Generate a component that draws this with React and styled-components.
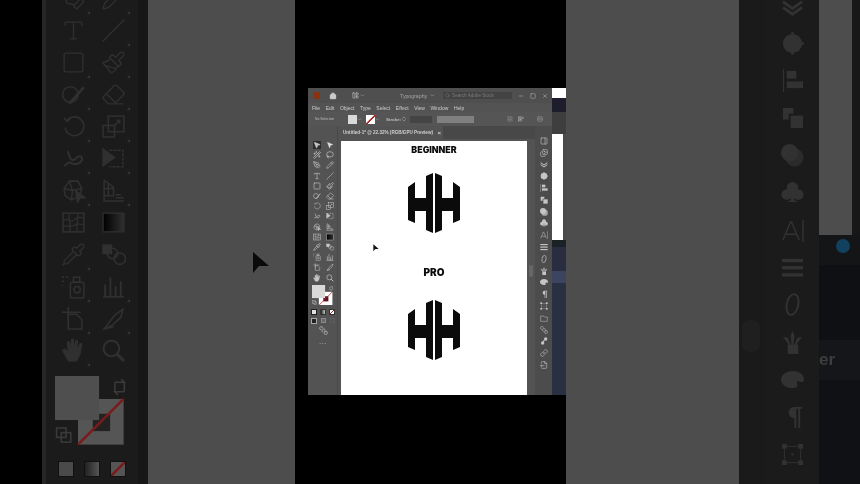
import styled, { createGlobalStyle } from "styled-components"
import {
  ChevronDown, ChevronsUpDown, Eraser, FileOutput, Hand, House, Lasso, LayoutGrid, LayoutPanelLeft, Link,
  MousePointer2, Paintbrush, PenTool, Pencil, Pipette, Search, Slash, Square, Type, WandSparkles, X, Minus,
  AlignStartVertical, Rows3, SquareStack, Images, PanelRight,
} from "lucide-react"

const GlobalStyle = createGlobalStyle`
  html, body { margin: 0; padding: 0; background: #000; }
  body { width: 860px; height: 484px; overflow: hidden; font-family: "Liberation Sans", Arial, sans-serif; }
`

const Stage = styled.div`
  display: flex;
  width: 860px;
  height: 484px;
  overflow: hidden;
  background: #000;
`

/* blurred backdrop, left */
const SideLeft = styled.div`
  position: relative;
  display: flex;
  width: 295px;
  flex: none;
  filter: blur(0.7px);
`

const BlackStrip = styled.div`
  width: 42px;
  background: #000;
`

const BigToolbar = styled.div`
  width: 106px;
  padding: 0 0 0 7px;
  box-sizing: border-box;
  background: #1b1b1b;
  border-left: 4px solid #262626;
  border-right: 10px solid #171717;
  overflow: hidden;
`

const GreyField = styled.div`
  flex: 1;
  background: #4d4d4d;
`

const BigPointer = styled.svg`
  position: absolute;
  left: 252px;
  top: 252px;
`

/* blurred backdrop, right */
const SideRight = styled.div`
  display: flex;
  flex: 1;
  filter: blur(0.7px);
`

const GreyFieldRight = styled.div`
  width: 173px;
  background: #4d4d4d;
`

const ScrollGutter = styled.div`
  width: 26px;
  background: #1a1a1a;
  padding-top: 320px;
  box-sizing: border-box;
`

const ScrollThumb = styled.div`
  width: 18px;
  height: 32px;
  margin-left: 3px;
  border-radius: 7px;
  background: #1f1f1f;
`

const BigPanel = styled.div`
  width: 54px;
  background: #1b1b1b;
  overflow: hidden;
`

const OtherApp = styled.div`
  flex: 1;
  display: flex;
  flex-direction: column;
  background: #101114;
`

const OtherTop = styled.div`
  height: 235px;
  display: flex;
  background: #171717;
`

const OtherPane = styled.div`
  width: 33px;
  background: #4d4d4d;
`

const OtherTaskbar = styled.div`
  height: 30px;
  padding: 4px 0 0 17px;
  box-sizing: border-box;
  background: #141517;
  display: flex;
  gap: 13px;
`

const OtherBall = styled.div`
  width: 14px;
  height: 14px;
  border-radius: 50%;
  background: #12405f;
  flex: none;
`

const OtherChip = styled.div`
  width: 6px;
  height: 10px;
  margin-top: 2px;
  background: #3a3428;
  flex: none;
`

const OtherBody = styled.div`
  height: 75px;
  background: #0f1013;
`

const OtherTitle = styled.div`
  height: 40px;
  background: #15161a;
  color: #3e3e3e;
  font-size: 17px;
  font-weight: 700;
  line-height: 40px;
`

/* middle column with the real capture */
const Center = styled.div`
  width: 271px;
  flex: none;
  height: 307px;
  margin-top: 88px;
  padding-left: 13px;
  box-sizing: border-box;
  display: flex;
  filter: blur(0.5px);
`

const Window = styled.div`
  width: 244px;
  display: flex;
  flex-direction: column;
  background: #535353;
  color: #c9c9c9;
  overflow: hidden;
`

const TitleBar = styled.div`
  height: 15px;
  flex: none;
  display: flex;
  align-items: center;
  padding: 0 4px 0 5px;
  background: #4f4f4f;
`

const AppMark = styled.div`
  width: 7px;
  height: 7px;
  background: #8a3212;
  margin-right: 9px;
`

const WorkspaceLabel = styled.span`
  font-size: 5.2px;
  color: #a4a4a4;
  margin: 0 3px 0 35px;
`

const SearchField = styled.div`
  width: 69px;
  height: 7px;
  margin-left: 8px;
  display: flex;
  align-items: center;
  gap: 2px;
  padding-left: 2px;
  box-sizing: border-box;
  background: #434343;
  color: #7b7b7b;
  font-size: 4.6px;
  white-space: nowrap;
`

const WindowButtons = styled.div`
  margin-left: auto;
  display: flex;
  gap: 6px;
  color: #b8b8b8;
`

const MenuBar = styled.div`
  height: 9px;
  flex: none;
  display: flex;
  align-items: center;
  gap: 5.6px;
  padding-left: 4px;
  font-size: 5px;
  color: #cdcdcd;
`

const ControlBar = styled.div`
  height: 14px;
  flex: none;
  display: flex;
  align-items: center;
  padding-left: 7px;
  background: #555;
  font-size: 4.4px;
  color: #bdbdbd;
`

const NoSelection = styled.span`
  width: 11px;
  font-size: 3.4px;
  white-space: nowrap;
`

const Swatch = styled.div`
  width: 9px;
  height: 9px;
  margin-left: ${(p) => p.$gap}px;
  background: ${(p) => (p.$none ? "linear-gradient(135deg, #fff 44%, #b12a2a 46%, #b12a2a 56%, #fff 58%)" : "#d9d9d9")};
`

const StrokeLabel = styled.span`
  margin: 0 0 0 6px;
  width: 15px;
  font-weight: 700;
`

const Field = styled.div`
  height: 7px;
  width: ${(p) => p.$w}px;
  margin-left: ${(p) => p.$gap}px;
  background: ${(p) => p.$bg};
`

const Body = styled.div`
  flex: 1;
  min-height: 0;
  display: flex;
`

const ToolColumn = styled.div`
  width: 30px;
  flex: none;
  display: flex;
  flex-direction: column;
  align-items: center;
  padding: 14px 0 0 1px;
  box-sizing: border-box;
  background: #535353;
  border-right: 1px solid #484848;
`

const ToolGrid = styled.div`
  display: grid;
  grid-template-columns: repeat(2, ${(p) => p.$col}px);
  grid-auto-rows: ${(p) => p.$row}px;
  margin-top: ${(p) => p.$top || 0}px;
  place-items: center;
  color: ${(p) => p.$color};
`

const ToolCell = styled.div`
  position: relative;
  display: flex;
  align-items: center;
  justify-content: center;
  background: ${(p) => (p.$active ? "#2c2c2c" : "transparent")};

  ${(p) =>
    p.$tick &&
    `&::after {
      content: "";
      position: absolute;
      right: -4px;
      bottom: -3px;
      border-style: solid;
      border-width: 0 0 3px 3px;
      border-color: transparent transparent #383838 transparent;
    }`}
`

const SwatchWrap = styled.div`
  margin: ${(p) => p.$margin};
  line-height: 0;
`

const MiniRow = styled.div`
  display: flex;
  gap: ${(p) => p.$gap}px;
  margin-top: ${(p) => p.$top}px;
  margin-left: ${(p) => p.$left || 0}px;
`

const ModeBox = styled.div`
  width: ${(p) => p.$size}px;
  height: ${(p) => p.$size}px;
  box-sizing: border-box;
  border: ${(p) => p.$border};
  background: ${(p) => p.$bg};
`

const Dots = styled.div`
  margin-top: 4px;
  font-size: 8px;
  line-height: 6px;
  letter-spacing: 0.5px;
  color: #bbb;
`

const DocColumn = styled.div`
  flex: 1;
  min-width: 0;
  display: flex;
  flex-direction: column;
`

const TabRow = styled.div`
  height: 13px;
  flex: none;
  display: flex;
  background: #484848;
`

const Tab = styled.div`
  width: 105px;
  display: flex;
  align-items: center;
  padding-left: 5px;
  box-sizing: border-box;
  background: #535353;
  font-size: 4.6px;
  font-weight: 700;
  color: #cfcfcf;
  white-space: nowrap;
`

const TabClose = styled.span`
  margin-left: auto;
  margin-right: 2px;
  font-size: 6px;
`

const CanvasArea = styled.div`
  position: relative;
  flex: 1;
  min-height: 0;
  display: flex;
  padding: 2px 0 0 3px;
  background: #535353;
`

const Page = styled.div`
  width: 186px;
  display: flex;
  flex-direction: column;
  align-items: center;
  background: #fff;
  color: #0c0c0c;
`

const Heading = styled.div`
  font-family: Inter, "Liberation Sans", sans-serif;
  font-size: ${(p) => p.$size}px;
  font-weight: 900;
  line-height: 10px;
  margin-top: ${(p) => p.$top}px;
`

const LogoBox = styled.div`
  margin-top: ${(p) => p.$top}px;
  line-height: 0;
`

const SmallPointer = styled.svg`
  position: absolute;
  left: 35px;
  top: 105px;
`

const VScroll = styled.div`
  width: 8px;
  flex: none;
  padding-top: 124px;
  box-sizing: border-box;
`

const VThumb = styled.div`
  width: 4px;
  height: 12px;
  margin-left: 2px;
  border-radius: 2px;
  background: #676767;
`

const RightDock = styled.div`
  width: 17px;
  flex: none;
  display: flex;
  flex-direction: column;
  background: #4c4c4c;
  color: #c5c5c5;
`

const PanelStack = styled.div`
  display: flex;
  flex-direction: column;
  align-items: center;
  margin-top: ${(p) => p.$top}px;
  color: ${(p) => p.$color};
`

const PanelSlot = styled.div`
  height: ${(p) => p.$h}px;
  display: flex;
  align-items: center;
  justify-content: center;
`

/* other app peeking out behind the window */
const Behind = styled.div`
  width: 14px;
  display: flex;
  flex-direction: column;
`

const BehindBand = styled.div`
  height: ${(p) => p.$h}px;
  flex: ${(p) => (p.$h ? "none" : 1)};
  background: ${(p) => p.$bg};
  border-right: ${(p) => (p.$edge ? "3px solid #4a4a4a" : "none")};
`

/* hand drawn Illustrator glyphs, the packages have no match for these */
const Glyph = ({ size, fill = "none", sw = 1.5, children }) => (
  <svg width={size} height={size} viewBox="0 0 24 24" fill={fill} stroke={fill === "none" ? "currentColor" : "none"} strokeWidth={sw}>
    {children}
  </svg>
)

const Shaper = ({ size }) => <Glyph size={size}><circle cx="9" cy="12" r="7.5" /><path d="M8 21 22 5" strokeWidth="2.6" /></Glyph>
const RotateTool = ({ size }) => <Glyph size={size}><path d="M6 6A9 9 0 1 1 4 13" /><path d="M3 4l3 3 3-3" /></Glyph>
const ScaleTool = ({ size }) => <Glyph size={size}><rect x="2" y="11" width="11" height="11" /><rect x="7" y="2" width="15" height="15" /><path d="M13 11l5-5M15 6h3v3" /></Glyph>
const WarpTool = ({ size }) => <Glyph size={size} sw={2}><path d="M3 19c3-1 3-4 6-3s5 3 9 0 2-7-1-6-4 5-7 3-2-7-4-8" /></Glyph>
const FreeTransform = ({ size }) => <Glyph size={size}><path d="M2 3l11 8-11 8Z" fill="currentColor" /><path d="M8 4h13v16H8" strokeDasharray="3 1" /></Glyph>
const ShapeBuilder = ({ size }) => <Glyph size={size}><path d="M3 10 8 3h8l4 7-2 7-8 4-6-4ZM3 10l8 2 9-2M11 12l-1 9M8 3l3 9" /><path d="M14 12l9 7-5 0-2 4Z" fill="currentColor" /></Glyph>
const Perspective = ({ size }) => <Glyph size={size}><path d="M3 2v20h19M3 2l9 7v8H3M3 10h9M7 5v12" /><path d="M14 19h8M14 16h5" /></Glyph>
const Mesh = ({ size }) => <Glyph size={size}><rect x="2" y="3" width="20" height="18" /><path d="M2 10c5-3 7 3 10 0s6-4 10-2M2 16c5-2 6 1 10-1s7-2 10 0M8 3c-2 6 3 10 0 18M16 3c2 6-3 10 0 18" strokeWidth="1.2" /></Glyph>
const Gradient = ({ size }) => (
  <svg width={size} height={size} viewBox="0 0 24 24">
    <defs>
      <linearGradient id="tool-grad">
        <stop offset="0" stopColor="#000" />
        <stop offset="1" stopColor="currentColor" />
      </linearGradient>
    </defs>
    <rect x="2" y="3" width="20" height="18" fill="url(#tool-grad)" stroke="currentColor" strokeWidth="1.2" />
  </svg>
)
const BlendTool = ({ size }) => <Glyph size={size}><rect x="2" y="3" width="8" height="8" fill="currentColor" /><circle cx="11" cy="11" r="5" /><circle cx="18" cy="16" r="5.5" /></Glyph>
const Sprayer = ({ size }) => <Glyph size={size}><rect x="9" y="8" width="13" height="15" rx="2" /><rect x="12" y="3" width="6" height="5" /><circle cx="15.5" cy="15" r="3" /><path d="M1 3h2M5 3h2M1 7h2M1 11h1" /></Glyph>
const Graph = ({ size }) => <Glyph size={size} sw={1.8}><path d="M2 22h20M4 22V10M9 22V3M14 22V12M19 22V7" /></Glyph>
const Artboard = ({ size }) => <Glyph size={size}><path d="M1 6h18M7 1v15" /><path d="M7 8h8l5 5v9H7Z" /></Glyph>
const Slicer = ({ size }) => <Glyph size={size}><path d="M3 22 13 9l8-6-2 8-9 8Z" /><path d="M3 22l9-2" /></Glyph>
const Zoom = ({ size }) => <Glyph size={size} sw={2}><circle cx="10" cy="10" r="7.5" /><path d="M15.5 15.5 22 22" strokeWidth="2.8" /></Glyph>
const FilledHand = ({ size }) => (
  <svg width={size} height={size} viewBox="0 0 24 24" fill="currentColor" stroke="currentColor" strokeWidth="1">
    <path d="M7 22 2 13c-1-2 1-3 2-2l3 3-1-9c0-2 2-2 2-1l2 6V2c0-1.500 2-1.500 2 0v9l2-8c.5-1.500 2-1 2 .5L15 12l3-6c.7-1.200 2-.7 2 .5l-2 10-3 5.500Z" />
  </svg>
)

const LayersBig = ({ size }) => <Glyph size={size} sw={3}><path d="M2 8l10 7 10-7M2 14l10 7 10-7" /></Glyph>
const Appearance = ({ size }) => <Glyph size={size} fill="currentColor"><circle cx="12" cy="12" r="10" /><circle cx="12" cy="1.500" r="1.500" /><circle cx="12" cy="22.500" r="1.500" /><circle cx="22.500" cy="12" r="1.500" /></Glyph>
const AlignGlyph = ({ size }) => <Glyph size={size} fill="currentColor"><rect x="2" y="0" width="1.200" height="24" /><rect x="6" y="2" width="10" height="8" /><rect x="6" y="13" width="17" height="7" /></Glyph>
const Pathfinder = ({ size }) => <Glyph size={size} fill="currentColor"><path d="M2 2h11v6H8v6H2Z" /><path d="M10 10h13v13H10Z" /></Glyph>
const Transparency = ({ size }) => <Glyph size={size} fill="currentColor"><circle cx="9" cy="9" r="9" /><circle cx="14" cy="14" r="9.500" opacity="0.75" /></Glyph>
const ClubGlyph = ({ size }) => <Glyph size={size} fill="currentColor"><circle cx="12" cy="7" r="6" /><circle cx="6" cy="14" r="5.500" /><circle cx="18" cy="14" r="5.500" /><path d="M11 12h2l1 8 4 2H6l4-2Z" /></Glyph>
const LetterA = ({ size }) => <Glyph size={size} sw={1.800}><path d="M2 22 10 3h1l8 19M5 16h12M23 1v23" strokeWidth="1.500" /></Glyph>
const Lines = ({ size }) => <Glyph size={size} fill="currentColor"><rect x="1" y="3" width="22" height="3.500" /><rect x="1" y="10.500" width="22" height="3.500" /><rect x="1" y="18" width="22" height="3.500" /></Glyph>
const OpenType = ({ size }) => <Glyph size={size} sw={2}><ellipse cx="12" cy="12" rx="6" ry="11" transform="rotate(12 12 12)" /></Glyph>
const Plume = ({ size }) => <Glyph size={size} fill="currentColor"><rect x="7" y="14" width="11" height="10" /><path d="M12 0l2 5-1 9h-2l-1-9ZM2 6l5 1 3 7H8ZM22 6l-5 1-3 7h2Z" /></Glyph>
const PaletteGlyph = ({ size }) => <Glyph size={size} fill="currentColor"><path d="M12 3c6 0 12 3 12 9 0 3-3 3-5 2-2-.7-3 1-2 3s-1 4-5 4C5 21 0 17 0 12S6 3 12 3Z" /></Glyph>
const PilcrowGlyph = ({ size }) => <Glyph size={size} fill="currentColor"><path d="M10 2h12v2h-2v20h-2V4h-2v20h-2V14a6 6 0 0 1 0-12Z" /></Glyph>
const TransformGlyph = ({ size }) => <Glyph size={size} fill="currentColor"><rect x="1" y="1" width="5" height="5" /><rect x="18" y="1" width="5" height="5" /><rect x="1" y="18" width="5" height="5" /><rect x="18" y="18" width="5" height="5" /><rect x="6" y="3" width="12" height="1" /><rect x="6" y="20" width="12" height="1" /><rect x="3" y="6" width="1" height="12" /><rect x="20" y="6" width="1" height="12" /><rect x="11" y="11" width="2" height="2" /></Glyph>
const BrushesGlyph = ({ size }) => <Glyph size={size}><path d="M2 6h9l2 3h9v13H2Z" /></Glyph>
const SymbolsGlyph = ({ size }) => <Glyph size={size} fill="currentColor"><circle cx="17" cy="6" r="5" /><circle cx="8" cy="18" r="5" /><path d="M12 8l3 2-6 6-2-2Z" /></Glyph>

const bigTools = [
  [PenTool, Pencil], [Type, Slash], [Square, Paintbrush], [Shaper, Eraser], [RotateTool, ScaleTool],
  [WarpTool, FreeTransform], [ShapeBuilder, Perspective], [Mesh, Gradient], [Pipette, BlendTool],
  [Sprayer, Graph], [Artboard, Slicer], [FilledHand, Zoom],
]

const noTick = new Set([Mesh, Gradient, Type, Zoom, BlendTool])

const panelIcons = [
  PanelRight, Images, LayersBig, Appearance, AlignGlyph, Pathfinder, Transparency, ClubGlyph, LetterA, Lines,
  OpenType, Plume, PaletteGlyph, PilcrowGlyph, TransformGlyph, BrushesGlyph, SquareStack, SymbolsGlyph, Link, FileOutput,
]

function ToolIcons({ size, stroke, ticks }) {
  return bigTools.flat().map((Icon, i) => (
    <ToolCell key={i} $tick={ticks && !noTick.has(Icon)}>
      <Icon size={size} strokeWidth={stroke} />
    </ToolCell>
  ))
}

function FillStroke({ width, fill, stroke, inner, line, glyph }) {
  return (
    <svg width={width} height={(width * 22) / 23.5} viewBox="0 0 23.500 22">
      <rect x="7.300" y="7.300" width="14.500" height="14.500" fill={stroke} />
      <rect x="12" y="12" width="5.500" height="5.500" fill={inner} />
      <path d="M7.300 21.800 21.800 7.300" stroke={line} strokeWidth="0.800" />
      <rect x="0" y="0" width="14" height="14" fill={fill} />
      <path d="M19 2h3l-1 -1M22 2v3M22 5h-3l1 1M19 5V2" stroke={glyph} strokeWidth="0.500" fill="none" />
      <rect x="0.500" y="16.500" width="3" height="3" fill="none" stroke={glyph} strokeWidth="0.500" />
      <rect x="2" y="18" width="3" height="3" fill="none" stroke={glyph} strokeWidth="0.500" />
    </svg>
  )
}

function HexLogo() {
  return (
    <svg width="52" height="60" viewBox="0 0 52 60" fill="#0b0b0b">
      <path d="M0 14 7 9V25H18V3L25 0V60L18 57V38H7V50L0 47Z" />
      <path d="M52 14 45 9V25H34V3L27 0V60L34 57V38H45V50L52 47Z" />
    </svg>
  )
}

function App() {
  return (
    <>
      <GlobalStyle />
      <Stage>
        <SideLeft>
          <BlackStrip />
          <BigToolbar>
            <ToolGrid $col={40} $row={32} $top={-18} $color="#303030">
              <ToolIcons size={25} stroke={1.3} ticks />
            </ToolGrid>
            <SwatchWrap $margin="10px 0 0 2px">
              <FillStroke width={74} fill="#4f4f4f" stroke="#555" inner="#222" line="#7a1b1b" glyph="#3a3a3a" />
            </SwatchWrap>
            <MiniRow $gap={10} $top={16} $left={5}>
              <ModeBox $size={16} $bg="#4a4a4a" $border="1px solid #111" />
              <ModeBox $size={16} $bg="linear-gradient(90deg, #222, #555)" $border="1px solid #111" />
              <ModeBox $size={16} $bg="linear-gradient(135deg, #555 42%, #7a1b1b 45%, #7a1b1b 55%, #555 58%)" $border="1px solid #111" />
            </MiniRow>
          </BigToolbar>
          <GreyField />
          <BigPointer width="18" height="22" viewBox="0 0 18 22">
            <path d="M1 0 17 14 7 14 1 21Z" fill="#0a0a0a" />
          </BigPointer>
        </SideLeft>

        <Center>
          <Window>
            <TitleBar>
              <AppMark />
              <House size={8} fill="#c9c9c9" strokeWidth={1} />
              <LayoutPanelLeft size={7} style={{ marginLeft: 15 }} />
              <ChevronDown size={5} style={{ marginLeft: 1 }} />
              <WorkspaceLabel>Typography</WorkspaceLabel>
              <ChevronDown size={5} />
              <SearchField>
                <Search size={5} />
                Search Adobe Stock
              </SearchField>
              <WindowButtons>
                <Minus size={6} />
                <Square size={6} />
                <X size={6} />
              </WindowButtons>
            </TitleBar>
            <MenuBar>
              {["File", "Edit", "Object", "Type", "Select", "Effect", "View", "Window", "Help"].map((m) => (
                <span key={m}>{m}</span>
              ))}
            </MenuBar>
            <ControlBar>
              <NoSelection>No Selection</NoSelection>
              <Swatch $gap={22} />
              <ChevronDown size={5} />
              <Swatch $gap={4} $none />
              <ChevronDown size={5} />
              <StrokeLabel>Stroke:</StrokeLabel>
              <ChevronsUpDown size={6} />
              <Field $w={22} $gap={3} $bg="#444" />
              <Field $w={37} $gap={5} $bg="#808080" />
              <LayoutGrid size={6} style={{ marginLeft: 33, color: "#8a8a8a" }} />
              <AlignStartVertical size={6} style={{ marginLeft: 5 }} />
              <Rows3 size={6} style={{ marginLeft: 13, color: "#9a9a9a" }} />
            </ControlBar>
            <Body>
              <ToolColumn>
                <ToolGrid $col={13} $row={10.2} $color="#c6c6c6">
                  <ToolCell $active><MousePointer2 size={8} fill="#c6c6c6" /></ToolCell>
                  <ToolCell><MousePointer2 size={8} fill="#e0e0e0" strokeWidth={1} /></ToolCell>
                  <ToolCell><WandSparkles size={8} /></ToolCell>
                  <ToolCell><Lasso size={8} /></ToolCell>
                  <ToolIcons size={8} stroke={1.8} />
                </ToolGrid>
                <SwatchWrap $margin="2px 0 0 0">
                  <FillStroke width={22} fill="#d9d9d9" stroke="#fff" inner="#5a1420" line="#b02323" glyph="#bbb" />
                </SwatchWrap>
                <MiniRow $gap={3} $top={4}>
                  <ModeBox $size={6} $bg="#e0e0e0" $border="1px solid #222" />
                  <ModeBox $size={6} $bg="linear-gradient(90deg, #222, #ccc)" $border="1px solid #333" />
                  <ModeBox $size={6} $bg="linear-gradient(135deg, #fff 40%, #b02323 45%, #b02323 55%, #fff 60%)" $border="1px solid #333" />
                </MiniRow>
                <MiniRow $gap={4} $top={3}>
                  <ModeBox $size={6} $bg="#222" $border="1px solid #aaa" />
                  <ModeBox $size={5} $bg="#6a6a6a" $border="1px solid #888" />
                  <ModeBox $size={5} $bg="#555" $border="1px solid #5c5c5c" />
                </MiniRow>
                <MiniRow $gap={0} $top={2}>
                  <SquareStack size={9} color="#bbb" />
                </MiniRow>
                <Dots>...</Dots>
              </ToolColumn>
              <DocColumn>
                <TabRow>
                  <Tab>
                    Untitled-1* @ 22.32% (RGB/GPU Preview)
                    <TabClose>×</TabClose>
                  </Tab>
                </TabRow>
                <CanvasArea>
                  <Page>
                    <Heading $top={4} $size={8.8}>BEGINNER</Heading>
                    <LogoBox $top={18}><HexLogo /></LogoBox>
                    <Heading $top={34} $size={10}>PRO</Heading>
                    <LogoBox $top={23}><HexLogo /></LogoBox>
                  </Page>
                  <VScroll><VThumb /></VScroll>
                  <SmallPointer width="6" height="8" viewBox="0 0 18 22">
                    <path d="M1 0 17 14 7 14 1 21Z" fill="#111" />
                  </SmallPointer>
                </CanvasArea>
              </DocColumn>
              <RightDock>
                <PanelStack $top={9} $color="#c5c5c5">
                  {panelIcons.map((Icon, i) => (
                    <PanelSlot key={i} $h={11.8}><Icon size={8} strokeWidth={1.8} /></PanelSlot>
                  ))}
                </PanelStack>
              </RightDock>
            </Body>
          </Window>
          <Behind>
            <BehindBand $h={10} $bg="#fff" />
            <BehindBand $h={14} $bg="#1d1d2c" />
            <BehindBand $h={22} $bg="#3e3e3e" />
            <BehindBand $h={106} $bg="#fff" $edge />
            <BehindBand $h={7} $bg="#1b2226" />
            <BehindBand $h={24} $bg="#2a2d3f" />
            <BehindBand $h={12} $bg="#3c4560" />
            <BehindBand $bg="#283042" />
          </Behind>
        </Center>

        <SideRight>
          <GreyFieldRight />
          <ScrollGutter><ScrollThumb /></ScrollGutter>
          <BigPanel>
            <PanelStack $top={-13} $color="#323232">
              {panelIcons.slice(2).map((Icon, i) => (
                <PanelSlot key={i} $h={37.4}><Icon size={23} strokeWidth={1.6} /></PanelSlot>
              ))}
            </PanelStack>
          </BigPanel>
          <OtherApp>
            <OtherTop><OtherPane /></OtherTop>
            <OtherTaskbar>
              <OtherBall />
              <OtherChip />
            </OtherTaskbar>
            <OtherBody />
            <OtherTitle>er</OtherTitle>
          </OtherApp>
        </SideRight>
      </Stage>
    </>
  )
}

export default App
